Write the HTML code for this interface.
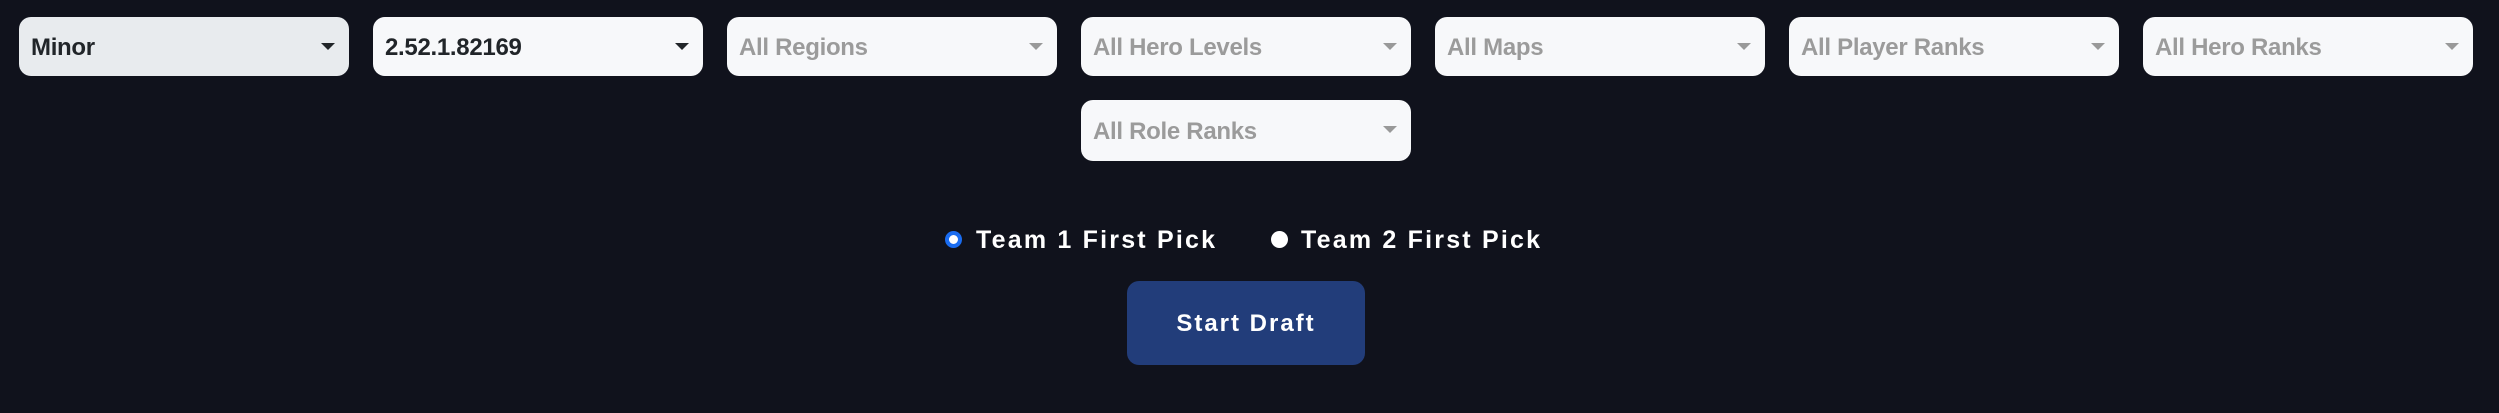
<!DOCTYPE html>
<html><head><style>
body{margin:0;width:2499px;height:413px;background:#10121c;font-family:"Liberation Sans",sans-serif;position:relative;overflow:hidden}
.s{position:absolute;width:330px;height:59px;border-radius:12px;background:#f7f8fa;box-sizing:border-box;padding-left:12px;line-height:61px;font-size:24px;font-weight:bold;color:#9b9b9b;letter-spacing:-0.3px}
.s.d{color:#212529}
.s:after{content:"";position:absolute;right:14px;top:26px;border-left:7px solid transparent;border-right:7px solid transparent;border-top:7px solid #999}
.s.d:after{border-top-color:#212529}
.r{position:absolute;top:227px;font-size:25px;font-weight:bold;color:#fff;letter-spacing:2.2px;line-height:26px}
.dot{position:absolute;width:17px;height:17px;border-radius:50%;top:231px;box-sizing:border-box}
.btn{position:absolute;left:1127px;top:281px;width:238px;height:84px;background:#223d7a;border-radius:12px;color:#fff;font-size:24px;font-weight:bold;text-align:center;line-height:86px;letter-spacing:2px}
</style></head><body>
<div class="s d" style="left:19px;top:17px;background:#e8ebee">Minor</div>
<div class="s d" style="left:373px;top:17px">2.52.1.82169</div>
<div class="s" style="left:727px;top:17px">All Regions</div>
<div class="s" style="left:1081px;top:17px">All Hero Levels</div>
<div class="s" style="left:1435px;top:17px">All Maps</div>
<div class="s" style="left:1789px;top:17px">All Player Ranks</div>
<div class="s" style="left:2143px;top:17px">All Hero Ranks</div>
<div class="s" style="left:1081px;top:100px;height:61px;line-height:63px">All Role Ranks</div>
<div class="dot" style="left:945px;background:#fff;border:4px solid #1a6cf0"></div>
<div class="r" style="left:976px">Team 1 First Pick</div>
<div class="dot" style="left:1271px;background:#fff"></div>
<div class="r" style="left:1301px">Team 2 First Pick</div>
<div class="btn">Start Draft</div>
</body></html>
